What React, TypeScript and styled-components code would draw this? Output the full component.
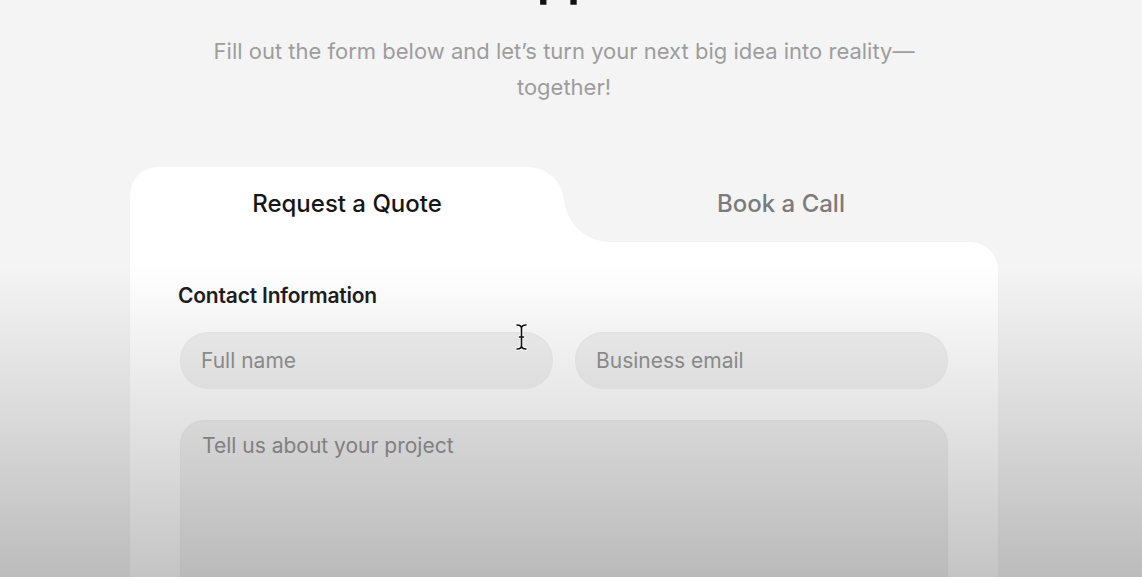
import React from "react";
import styled, { createGlobalStyle } from "styled-components";

const GlobalStyle = createGlobalStyle`
  html, body {
    margin: 0;
    padding: 0;
    background: #f4f4f4;
    overflow: hidden;
  }
  * { box-sizing: border-box; }
  body {
    font-family: Inter, "Noto Sans", "Liberation Sans", sans-serif;
    -webkit-font-smoothing: antialiased;
  }
`;

const Page = styled.main`
  position: relative;
  width: 1142px;
  height: 577px;
  overflow: hidden;
  background: #f4f4f4;
  display: flex;
  flex-direction: column;
  align-items: center;
`;

const Heading = styled.h1`
  margin: -51px 0 0 -14px;
  font-size: 50px;
  line-height: 56px;
  font-weight: 600;
  color: #111;
  letter-spacing: -1px;
  text-align: center;
`;

const Subtitle = styled.p`
  margin: 28px 0 0 -14px;
  font-size: 22px;
  line-height: 36px;
  color: #9d9d9d;
  text-align: center;
  letter-spacing: 0px;
`;

const Card = styled.section`
  margin: 62px 14px 0 0;
  width: 868px;
  display: flex;
  flex-direction: column;
`;

const TabRow = styled.div`
  display: grid;
  grid-template-columns: 1fr 1fr;
  height: 75px;
`;

const Tab = styled.button<{ $active?: boolean }>`
  position: relative;
  border: none;
  margin: 0;
  padding: 0 0 2px;
  font-family: Inter, "Noto Sans", sans-serif;
  font-size: 24px;
  font-weight: 500;
  letter-spacing: 0px;
  cursor: pointer;
  color: ${(p) => (p.$active ? "#161616" : "#7b7b7b")};
  background: #ffffff;
  border-radius: ${(p) => (p.$active ? "28px 36px 0 0" : "0")};
  z-index: 0;

  ${(p) =>
    !p.$active &&
    `
    &::before {
      content: "";
      position: absolute;
      inset: 0;
      background: #f4f4f4;
      border-bottom-left-radius: 46px;
      z-index: -1;
    }
  `}
`;

const Body = styled.div`
  background: #ffffff;
  border-radius: 0 28px 28px 28px;
  padding: 41px 50px 60px 50px;
  display: flex;
  flex-direction: column;
  min-height: 500px;
`;

const SectionTitle = styled.h2`
  margin: 0 0 0 -2px;
  font-size: 21px;
  line-height: 26px;
  font-weight: 600;
  color: #1e1e1e;
  letter-spacing: -0.2px;
`;

const FieldRow = styled.div`
  margin-top: 23px;
  display: grid;
  grid-template-columns: 1fr 1fr;
  gap: 22px;
`;

const Input = styled.input`
  height: 57px;
  border: none;
  border-radius: 28px;
  background: #f2f2f2;
  box-shadow: inset 0 1px 3px rgba(0, 0, 0, 0.03);
  padding: 0 21px;
  font-family: Inter, "Noto Sans", sans-serif;
  font-size: 21px;
  color: #222;
  outline: none;
  &::placeholder {
    color: #939393;
  }
`;

const TextArea = styled.textarea`
  margin-top: 31px;
  height: 260px;
  border: none;
  border-radius: 24px;
  background: #f2f2f2;
  box-shadow: inset 0 1px 3px rgba(0, 0, 0, 0.03);
  padding: 13px 22px;
  font-family: Inter, "Noto Sans", sans-serif;
  font-size: 21px;
  line-height: 26px;
  resize: none;
  outline: none;
  &::placeholder {
    color: #939393;
  }
`;

const Shade = styled.div`
  position: absolute;
  inset: 0;
  pointer-events: none;
  background: linear-gradient(
    to bottom,
    rgba(0, 0, 0, 0) 0px,
    rgba(0, 0, 0, 0) 265px,
    rgba(0, 0, 0, 0.11) 420px,
    rgba(0, 0, 0, 0.23) 577px
  );
`;

const Cursor = styled.svg`
  position: absolute;
  left: 515px;
  top: 323px;
  pointer-events: none;
`;

const beam =
  "M2 2 Q6.5 2 6.5 5.5 Q6.5 2 11 2 M6.5 5.5 V22.5 M2 26 Q6.5 26 6.5 22.5 Q6.5 26 11 26 M4.5 14 H8.5";

export default function App() {
  return (
    <>
      <GlobalStyle />
      <Page>
        <Heading>Happen</Heading>
        <Subtitle>
          Fill out the form below and let’s turn your next big idea into reality—
          <br />
          together!
        </Subtitle>
        <Card>
          <TabRow>
            <Tab $active>Request a Quote</Tab>
            <Tab>Book a Call</Tab>
          </TabRow>
          <Body>
            <SectionTitle>Contact Information</SectionTitle>
            <FieldRow>
              <Input placeholder="Full name" />
              <Input placeholder="Business email" />
            </FieldRow>
            <TextArea placeholder="Tell us about your project" />
          </Body>
        </Card>
        <Shade />
        <Cursor width="13" height="28" viewBox="0 0 13 28">
          <path d={beam} fill="none" stroke="#fff" strokeWidth="3.4" strokeLinecap="round" />
          <path d={beam} fill="none" stroke="#111" strokeWidth="1.6" strokeLinecap="round" />
        </Cursor>
      </Page>
    </>
  );
}
